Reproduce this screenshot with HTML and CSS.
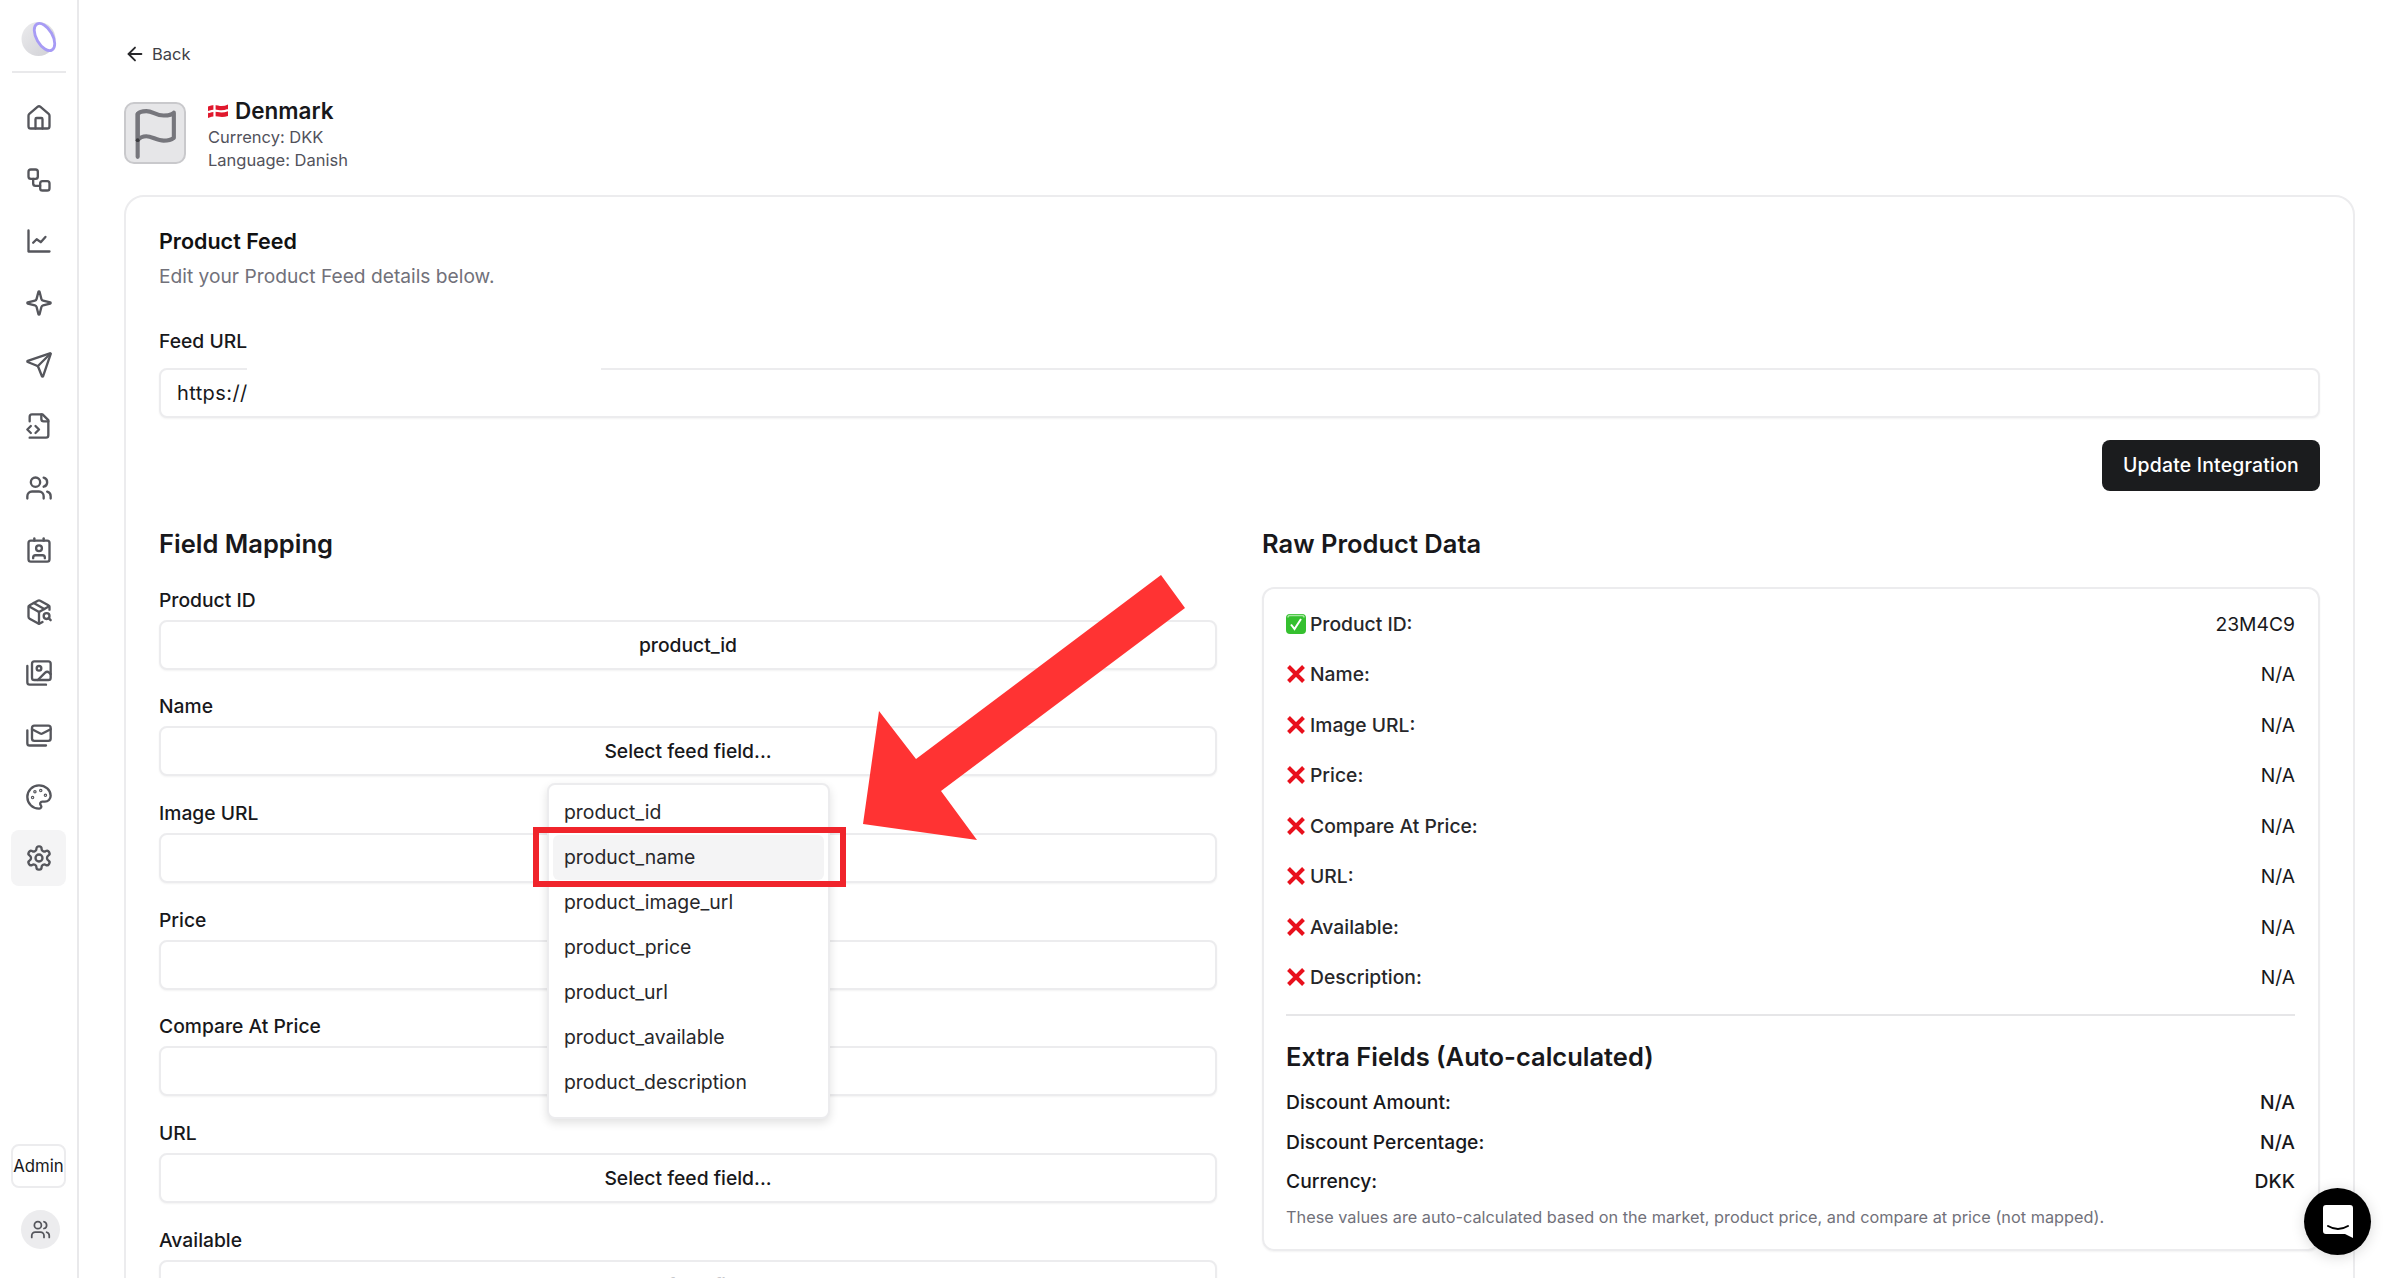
FILE: index.html
```html
<!DOCTYPE html>
<html lang="en">
<head>
<meta charset="utf-8">
<title>Denmark - Product Feed</title>
<link rel="stylesheet" href="styles.css">
</head>
<body>
<div class="app">
  <aside class="sidebar">
    <svg class="logo" viewBox="0 0 36 36">
      <defs><linearGradient id="lg" x1="0" y1="0" x2="1" y2="1"><stop offset="0" stop-color="#ececee"/><stop offset="1" stop-color="#cfcfd4"/></linearGradient></defs>
      <circle cx="17.5" cy="18" r="17" fill="url(#lg)"/>
      <ellipse cx="23.500" cy="16" rx="8" ry="15" transform="rotate(-30 23.500 16)" fill="#fff" stroke="#a79bf5" stroke-width="2.800"/>
    </svg>
    <div class="sep"></div>
    <nav class="nav">
      <a class="nav-item"><svg class="ico" viewBox="0 0 24 24"><path d="M15 21v-8a1 1 0 0 0-1-1h-4a1 1 0 0 0-1 1v8"/><path d="M3 10a2 2 0 0 1 .709-1.528l7-5.999a2 2 0 0 1 2.582 0l7 5.999A2 2 0 0 1 21 10v9a2 2 0 0 1-2 2H5a2 2 0 0 1-2-2z"/></svg></a>
      <a class="nav-item"><svg class="ico" viewBox="0 0 24 24"><rect x="3" y="3" width="8" height="8" rx="2"/><path d="M7 11v4a2 2 0 0 0 2 2h4"/><rect x="13" y="13" width="8" height="8" rx="2"/></svg></a>
      <a class="nav-item"><svg class="ico" viewBox="0 0 24 24"><path d="M3 3v18h18"/><path d="m7 13.500 3-3 3.500 2.500 4-4.500"/></svg></a>
      <a class="nav-item"><svg class="ico" viewBox="0 0 24 24"><path d="M9.937 15.500A2 2 0 0 0 8.500 14.063l-6.135-1.582a.5.5 0 0 1 0-.962L8.500 9.936A2 2 0 0 0 9.937 8.500l1.582-6.135a.5.5 0 0 1 .963 0L14.063 8.500A2 2 0 0 0 15.500 9.937l6.135 1.581a.5.5 0 0 1 0 .964L15.500 14.063a2 2 0 0 0-1.437 1.437l-1.582 6.135a.5.5 0 0 1-.963 0z"/></svg></a>
      <a class="nav-item"><svg class="ico" viewBox="0 0 24 24"><path d="M14.536 21.686a.5.5 0 0 0 .937-.024l6.500-19a.496.496 0 0 0-.635-.635l-19 6.500a.5.5 0 0 0-.024.937l7.930 3.180a2 2 0 0 1 1.112 1.110z"/><path d="m21.854 2.147-10.940 10.939"/></svg></a>
      <a class="nav-item"><svg class="ico" viewBox="0 0 24 24"><path d="M4 22h14a2 2 0 0 0 2-2V7l-5-5H6a2 2 0 0 0-2 2v4"/><path d="M14 2v4a2 2 0 0 0 2 2h4"/><path d="m5 12-3 3 3 3"/><path d="m9 18 3-3-3-3"/></svg></a>
      <a class="nav-item"><svg class="ico" viewBox="0 0 24 24"><path d="M16 21v-2a4 4 0 0 0-4-4H6a4 4 0 0 0-4 4v2"/><circle cx="9" cy="7" r="4"/><path d="M22 21v-2a4 4 0 0 0-3-3.870"/><path d="M16 3.130a4 4 0 0 1 0 7.750"/></svg></a>
      <a class="nav-item"><svg class="ico" viewBox="0 0 24 24"><path d="M16 2v2"/><path d="M8 2v2"/><path d="M7 19v-.500a2 2 0 0 1 2-2h6a2 2 0 0 1 2 2v.500"/><circle cx="12" cy="10.500" r="2.500"/><rect x="3" y="4" width="18" height="18" rx="2"/></svg></a>
      <a class="nav-item"><svg class="ico" viewBox="0 0 24 24"><path d="M21 10V8a2 2 0 0 0-1-1.730l-7-4a2 2 0 0 0-2 0l-7 4A2 2 0 0 0 3 8v8a2 2 0 0 0 1 1.730l7 4a2 2 0 0 0 2 0l2-1.140"/><path d="m7.500 4.270 9 5.150"/><polyline points="3.290 7 12 12 20.710 7"/><line x1="12" y1="22" x2="12" y2="12"/><circle cx="18.500" cy="15.500" r="2.500"/><path d="M20.270 17.270 22 19"/></svg></a>
      <a class="nav-item"><svg class="ico" viewBox="0 0 24 24"><path d="M18 22H4a2 2 0 0 1-2-2V6"/><path d="m22 13-1.296-1.296a2.410 2.410 0 0 0-3.408 0L11 18"/><circle cx="12" cy="8" r="2"/><rect x="6" y="2" width="16" height="16" rx="2"/></svg></a>
      <a class="nav-item"><svg class="ico" viewBox="0 0 24 24"><rect x="6" y="4" width="16" height="13" rx="2"/><path d="m22 7-7.100 3.780c-.57.300-1.230.300-1.800 0L6 7"/><path d="M2 8v11c0 1.100.9 2 2 2h14"/></svg></a>
      <a class="nav-item"><svg class="ico" viewBox="0 0 24 24"><path d="M12 22a1 1 0 0 1 0-20 10 9 0 0 1 10 9 5 5 0 0 1-5 5h-2.250a1.750 1.750 0 0 0-1.400 2.800l.3.4a1.750 1.750 0 0 1-1.400 2.800z"/><circle cx="13.500" cy="6.500" r=".5"/><circle cx="17.500" cy="10.500" r=".5"/><circle cx="6.500" cy="12.500" r=".5"/><circle cx="8.500" cy="7.500" r=".5"/></svg></a>
      <a class="nav-item active"><svg class="ico" viewBox="0 0 24 24"><path d="M12.220 2h-.44a2 2 0 0 0-2 2v.18a2 2 0 0 1-1 1.730l-.43.250a2 2 0 0 1-2 0l-.15-.08a2 2 0 0 0-2.730.73l-.22.380a2 2 0 0 0 .73 2.730l.15.100a2 2 0 0 1 1 1.720v.510a2 2 0 0 1-1 1.740l-.15.090a2 2 0 0 0-.73 2.730l.22.380a2 2 0 0 0 2.730.73l.15-.08a2 2 0 0 1 2 0l.43.250a2 2 0 0 1 1 1.730V20a2 2 0 0 0 2 2h.44a2 2 0 0 0 2-2v-.18a2 2 0 0 1 1-1.730l.43-.250a2 2 0 0 1 2 0l.15.080a2 2 0 0 0 2.730-.73l.22-.390a2 2 0 0 0-.73-2.730l-.15-.08a2 2 0 0 1-1-1.740v-.5a2 2 0 0 1 1-1.740l.15-.09a2 2 0 0 0 .73-2.730l-.22-.38a2 2 0 0 0-2.730-.73l-.15.080a2 2 0 0 1-2 0l-.43-.25a2 2 0 0 1-1-1.730V4a2 2 0 0 0-2-2z"/><circle cx="12" cy="12" r="3"/></svg></a>
    </nav>
    <div class="admin">Admin</div>
    <div class="avatar"><svg class="avatar-ico" viewBox="0 0 24 24"><path d="M16 21v-2a4 4 0 0 0-4-4H6a4 4 0 0 0-4 4v2"/><circle cx="9" cy="7" r="4"/><path d="M22 21v-2a4 4 0 0 0-3-3.870"/><path d="M16 3.130a4 4 0 0 1 0 7.750"/></svg></div>
  </aside>

  <main class="main">
    <a class="back"><svg class="back-ico" viewBox="0 0 24 24"><path d="m12 19-7-7 7-7"/><path d="M19 12H5"/></svg>Back</a>

    <header class="market">
      <div class="flag-box"><svg class="flag-ico" viewBox="0 0 24 24"><path d="M4 15.300s1.500-1.800 4-1.800 5 2 8 2 4.700-1.300 4.700-1.300V2.600s-1 1.300-4.700 1.300-5-2-8-2-4 1.300-4 1.300z"/><line x1="4" y1="23" x2="4" y2="3.200"/><circle class="flag-dot" cx="4" cy="15.300" r=".9"/></svg></div>
      <div class="market-text">
        <h1 class="market-name"><svg class="dk" viewBox="0 0 20 14"><path d="M0 2.500Q5 0 10 1.500T20 .5V12Q15 13.500 10 12.500T0 14Z" fill="#e0182d"/><path d="M6.500 1v12.500" stroke="#fff" stroke-width="2.200"/><path d="M0 8.300Q5 6 10 7T20 6" fill="none" stroke="#fff" stroke-width="2.200"/></svg>Denmark</h1>
        <p class="market-meta">Currency: DKK</p>
        <p class="market-meta">Language: Danish</p>
      </div>
    </header>

    <section class="card">
      <h2 class="card-title">Product Feed</h2>
      <p class="card-sub">Edit your Product Feed details below.</p>
      <label class="label url-label">Feed URL</label>
      <div class="input url-input">https://</div>
      <div class="actions"><button class="btn">Update Integration</button></div>

      <div class="columns">
        <div class="col">
          <h3 class="section-title">Field Mapping</h3>
          <div class="field"><label class="label">Product ID</label><div class="select">product_id</div></div>
          <div class="field"><label class="label">Name</label><div class="select">Select feed field...</div></div>
          <div class="field"><label class="label">Image URL</label><div class="select"></div></div>
          <div class="field"><label class="label">Price</label><div class="select"></div></div>
          <div class="field"><label class="label">Compare At Price</label><div class="select"></div></div>
          <div class="field"><label class="label">URL</label><div class="select">Select feed field...</div></div>
          <div class="field"><label class="label">Available</label><div class="select faded">Select feed field...</div></div>
        </div>
        <div class="col">
          <h3 class="section-title">Raw Product Data</h3>
          <div class="raw">
            <div class="rows">
              <div class="row"><span class="key"><svg class="mark" viewBox="0 0 20 20"><rect width="20" height="20" rx="4" fill="#35c02f"/><path d="M2 3.500Q2 1.500 4 1.500h12q2 0 2 2" fill="none" stroke="#a5e6a0" stroke-width="1.500"/><path d="m5 10.500 3.500 4.500 6.500-10" fill="none" stroke="#fff" stroke-width="2"/></svg>Product ID:</span><span>23M4C9</span></div>
              <div class="row"><span class="key"><svg class="mark" viewBox="0 0 20 20"><path d="m2.500 2.500 15 15M17.500 2.500l-15 15" stroke="#e8101c" stroke-width="4"/></svg>Name:</span><span>N/A</span></div>
              <div class="row"><span class="key"><svg class="mark" viewBox="0 0 20 20"><path d="m2.500 2.500 15 15M17.500 2.500l-15 15" stroke="#e8101c" stroke-width="4"/></svg>Image URL:</span><span>N/A</span></div>
              <div class="row"><span class="key"><svg class="mark" viewBox="0 0 20 20"><path d="m2.500 2.500 15 15M17.500 2.500l-15 15" stroke="#e8101c" stroke-width="4"/></svg>Price:</span><span>N/A</span></div>
              <div class="row"><span class="key"><svg class="mark" viewBox="0 0 20 20"><path d="m2.500 2.500 15 15M17.500 2.500l-15 15" stroke="#e8101c" stroke-width="4"/></svg>Compare At Price:</span><span>N/A</span></div>
              <div class="row"><span class="key"><svg class="mark" viewBox="0 0 20 20"><path d="m2.500 2.500 15 15M17.500 2.500l-15 15" stroke="#e8101c" stroke-width="4"/></svg>URL:</span><span>N/A</span></div>
              <div class="row"><span class="key"><svg class="mark" viewBox="0 0 20 20"><path d="m2.500 2.500 15 15M17.500 2.500l-15 15" stroke="#e8101c" stroke-width="4"/></svg>Available:</span><span>N/A</span></div>
              <div class="row"><span class="key"><svg class="mark" viewBox="0 0 20 20"><path d="m2.500 2.500 15 15M17.500 2.500l-15 15" stroke="#e8101c" stroke-width="4"/></svg>Description:</span><span>N/A</span></div>
            </div>
            <div class="divider"></div>
            <h4 class="extra-title">Extra Fields (Auto-calculated)</h4>
            <div class="extra-rows">
              <div class="extra-row"><span>Discount Amount:</span><span>N/A</span></div>
              <div class="extra-row"><span>Discount Percentage:</span><span>N/A</span></div>
              <div class="extra-row"><span>Currency:</span><span>DKK</span></div>
            </div>
            <p class="note">These values are auto-calculated based on the market, product price, and compare at price (not mapped).</p>
          </div>
        </div>
      </div>
    </section>
  </main>
</div>

<ul class="dropdown">
  <li class="option">product_id</li>
  <li class="option hover">product_name</li>
  <li class="option">product_image_url</li>
  <li class="option">product_price</li>
  <li class="option">product_url</li>
  <li class="option">product_available</li>
  <li class="option">product_description</li>
</ul>

<div class="callout-box"></div>
<svg class="callout-arrow" viewBox="0 0 330 270"><polygon points="298,3 322,36 78,219 114,268 0,252 16,139 53,187"/></svg>

<div class="chat"><svg class="chat-ico" viewBox="0 0 30 33"><path d="M3 0h24a3 3 0 0 1 3 3v30l-8-4H3a3 3 0 0 1-3-3V3a3 3 0 0 1 3-3z" fill="#fff"/><path d="M5 21q10 6 20 0" fill="none" stroke="#000" stroke-width="2" stroke-linecap="round"/></svg></div>
</body>
</html>
```
FILE: styles.css
```css
* { box-sizing: border-box; }
html, body { margin: 0; height: 100%; }
body {
  height: 1278px;
  overflow: hidden;
  background: #fff;
  color: #18181b;
  font-family: Inter, "Liberation Sans", sans-serif;
  font-size: 19.3px;
  position: relative;
}
h1, h2, h3, h4, p, ul { margin: 0; padding: 0; }
ul { list-style: none; }

.app { display: flex; height: 1278px; }

.sidebar {
  width: 79px;
  flex: none;
  border-right: 2px solid #e9e9eb;
  display: flex;
  flex-direction: column;
  align-items: center;
  padding-top: 21px;
}
.logo { width: 36px; height: 36px; flex: none; }
.sep { width: 54px; height: 2px; background: #e9e9eb; margin-top: 14px; }
.nav { display: flex; flex-direction: column; gap: 5.7px; margin-top: 17px; }
.nav-item {
  width: 55px;
  height: 56px;
  display: flex;
  align-items: center;
  justify-content: center;
  border-radius: 8px;
}
.nav-item.active { background: #f4f4f5; }
.ico {
  width: 28px;
  height: 28px;
  fill: none;
  stroke: #55565c;
  stroke-width: 2;
  stroke-linecap: round;
  stroke-linejoin: round;
}
.admin {
  margin-top: auto;
  width: 55px;
  height: 44px;
  border: 2px solid #ececee;
  border-radius: 8px;
  font-size: 16.800px;
  line-height: 40px;
  white-space: nowrap;
  display: flex;
  justify-content: center;
}
.avatar {
  width: 39px;
  height: 39px;
  margin: 22px 0 29px 4px;
  border-radius: 50%;
  background: #ececee;
  display: flex;
  align-items: center;
  justify-content: center;
}
.avatar-ico {
  width: 21px;
  height: 21px;
  fill: none;
  stroke: #55565c;
  stroke-width: 2;
  stroke-linecap: round;
  stroke-linejoin: round;
}

.main { flex: 1; min-width: 0; padding: 42px 43px 0 45px; }

.back {
  display: flex;
  align-items: center;
  gap: 6px;
  height: 24px;
  font-size: 16.500px;
  color: #3f3f46;
}
.back-ico {
  width: 22px;
  height: 22px;
  fill: none;
  stroke: #27272a;
  stroke-width: 2;
  stroke-linecap: round;
  stroke-linejoin: round;
}

.market { display: flex; gap: 22px; margin-top: 36px; height: 62px; }
.flag-box {
  width: 62px;
  height: 62px;
  border: 2px solid #c9c9cc;
  border-radius: 10px;
  background: #e6e6e8;
  display: flex;
  align-items: center;
  justify-content: center;
}
.flag-ico {
  width: 52px;
  height: 52px;
  fill: none;
  stroke: #76767c;
  stroke-width: 1.9;
  stroke-linecap: round;
  stroke-linejoin: round;
}
.flag-dot { fill: #3a3a3e; stroke: none; }
.market-text { margin-top: -5px; }
.market-name {
  display: flex;
  align-items: center;
  gap: 7px;
  font-size: 22.500px;
  line-height: 28px;
  font-weight: 600;
}
.dk { width: 20px; height: 14px; }
.market-meta { font-size: 16.500px; line-height: 23px; color: #52525b; }
.market-name + .market-meta { margin-top: 1px; }

.card {
  margin-top: 31px;
  border: 2px solid #ececee;
  border-radius: 20px;
  padding: 30px 33px 40px;
}
.card-title { font-size: 21.500px; line-height: 28px; font-weight: 600; color: #111; }
.card-sub { font-size: 19.200px; line-height: 26px; margin-top: 7.500px; color: #71717a; }
.label {
  display: block;
  font-size: 19.300px;
  line-height: 24px;
  font-weight: 500;
}
.url-label { margin-top: 40px; }

.input, .select {
  height: 50px;
  border: 2px solid #ececee;
  border-radius: 8px;
  box-shadow: 0 1px 2px rgba(0, 0, 0, .05);
  background: #fff;
}
.input {
  margin-top: 15px;
  padding: 0 16px;
  line-height: 46px;
  position: relative;
  font-size: 20px;
  letter-spacing: .4px;
}
.url-input::before {
  content: "";
  position: absolute;
  left: 86px;
  top: -3px;
  width: 354px;
  height: 4px;
  background: #fff;
}

.actions { display: flex; justify-content: flex-end; margin-top: 22px; }
.btn {
  height: 51px;
  width: 218px;
  border: 0;
  border-radius: 8px;
  background: #1b1c1e;
  color: #fff;
  font: 500 19.400px Inter, "Liberation Sans", sans-serif;
  letter-spacing: .2px;
}

.columns { display: grid; grid-template-columns: 1fr 1fr; gap: 45px; margin-top: 37px; }
.section-title { font-size: 25.500px; line-height: 32px; font-weight: 600; margin-bottom: 28px; }
.field { margin-bottom: 24.700px; }
.select {
  margin-top: 8px;
  text-align: center;
  line-height: 46px;
  font-weight: 500;
}
.select.faded { color: #c8c8cc; font-weight: 400; }

.raw {
  margin-top: -1px;
  border: 2px solid #ececee;
  border-radius: 12px;
  padding: 21px 23px 22px 22px;
  box-shadow: 0 1px 2px rgba(0, 0, 0, .05);
}
.rows { display: flex; flex-direction: column; gap: 22.5px; }
.row, .extra-row { display: flex; justify-content: space-between; align-items: center; }
.row { height: 28px; }
.key { display: flex; align-items: center; gap: 4px; font-weight: 500; color: #27272a; }
.mark { width: 20px; height: 20px; }
.divider { height: 2px; background: #e6e6e8; margin-top: 23px; }
.extra-title { font-size: 25.500px; line-height: 32px; font-weight: 600; margin-top: 25px; }
.extra-rows { display: flex; flex-direction: column; gap: 15.5px; margin-top: 17px; }
.extra-row { height: 24px; font-weight: 500; }
.note { font-size: 16.300px; line-height: 20px; margin-top: 14px; color: #71717a; }

.dropdown {
  position: absolute;
  left: 547px;
  top: 783px;
  width: 283px;
  height: 336px;
  padding: 5px 4px;
  background: #fff;
  border: 2px solid #ececee;
  border-radius: 8px;
  box-shadow: 0 4px 10px rgba(0, 0, 0, .12);
}
.option {
  height: 45px;
  padding: 0 11px;
  line-height: 45px;
  font-size: 19.400px;
  border-radius: 6px;
  color: #27272a;
}
.option.hover { background: #f4f4f5; }

.callout-box {
  position: absolute;
  left: 533px;
  top: 827px;
  width: 313px;
  height: 60px;
  border: 6px solid #f0242b;
}
.callout-arrow {
  position: absolute;
  left: 863px;
  top: 572px;
  width: 330px;
  height: 270px;
  fill: #ff3333;
}

.chat {
  position: absolute;
  left: 2304px;
  top: 1188px;
  width: 67px;
  height: 67px;
  border-radius: 50%;
  background: #000;
  box-shadow: 0 2px 14px rgba(0, 0, 0, .15);
  display: flex;
  align-items: center;
  justify-content: center;
}
.chat-ico { width: 30px; height: 33px; }
```
